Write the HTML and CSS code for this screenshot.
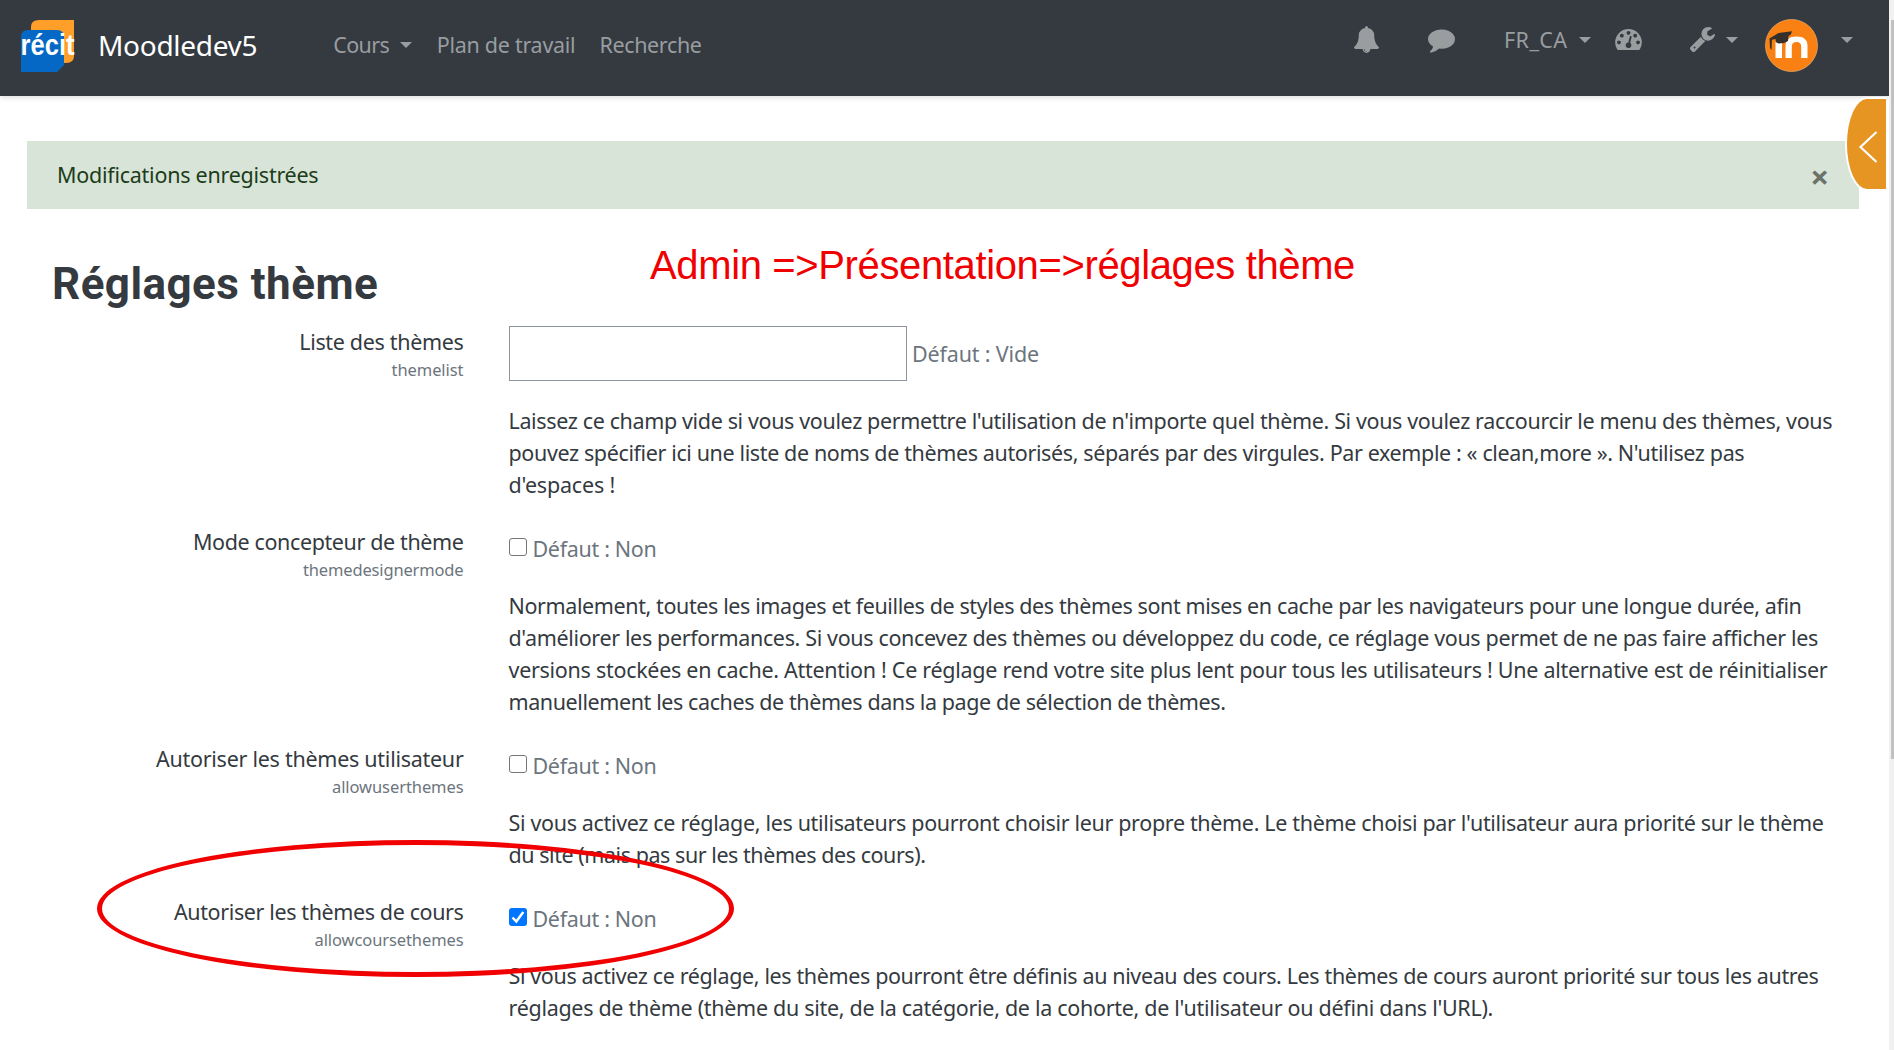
FILE: index.html
```html
<!DOCTYPE html>
<html lang="fr-CA">
<head>
<meta charset="utf-8">
<title>Réglages thème</title>
<link rel="stylesheet" href="styles.css">
</head>
<body>
<header class="navbar">
  <div class="nav-left">
    <svg class="logo" viewBox="0 0 53 52"><path d="M18 0h35v36q0 7-8 7H10V7q0-7 8-7z" fill="#ff9f2a"/><path d="M7 10h29q7 0 7 7v28l-7 7H0V17q0-7 7-7z" fill="#0568c4"/><text class="logo-text" x="-.5" y="34.500" textLength="54" lengthAdjust="spacingAndGlyphs">récit</text></svg>
    <span class="brand">Moodledev5</span>
    <nav class="links">
      <a class="link l1"><span>Cours</span><i class="caret"></i></a>
      <a class="link l2"><span>Plan de travail</span></a>
      <a class="link l3"><span>Recherche</span></a>
    </nav>
  </div>
  <div class="nav-right">
    <svg class="icon bell" viewBox="64 0 1664 1792"><path d="M912 1696q0-16-16-16-59 0-101.500-42.500t-42.500-101.500q0-16-16-16t-16 16q0 73 51.500 124.500t124.500 51.500q16 0 16-16zm816-288q0 52-38 90t-90 38h-448q0 106-75 181t-181 75-181-75-75-181h-448q-52 0-90-38t-38-90q50-42 91-88t85-119.500 74.500-158.500 50-206 19.500-260q0-152 117-282.500t307-158.500q-8-19-8-39 0-40 28-68t68-28 68 28 28 68q0 20-8 39 190 28 307 158.500t117 282.500q0 139 19.500 260t50 206 74.500 158.500 85 119.500 91 88z"/></svg>
    <svg class="icon comment" viewBox="0 256 1792 1536"><path d="M1792 896q0 174-120 321.500t-326 233-450 85.500q-70 0-145-8-198 175-460 242-49 14-114 22-17 2-30.500-9t-17.500-29v-1q-3-4-.5-12t2-10 4.500-9.500l6-9 7-8.500 8-9q7-8 31-34.500t34.500-38 31-39.500 32.500-51 27-59 26-76q-157-89-247.500-220t-90.500-281q0-130 71-248.500t191-204.500 286-136.500 348-50.500q244 0 450 85.500t326 233 120 321.500z"/></svg>
    <span class="lang">FR_CA</span><i class="caret"></i>
    <svg class="icon gauge" viewBox="0 256 1792 1408"><path d="M384 1152q0-53-37.500-90.500t-90.500-37.500-90.500 37.500-37.500 90.500 37.500 90.500 90.500 37.500 90.500-37.500 37.500-90.500zm192-448q0-53-37.500-90.500t-90.500-37.500-90.500 37.500-37.500 90.500 37.500 90.500 90.500 37.500 90.500-37.500 37.500-90.500zm428 481l101-382q6-26-7.500-48.500t-38.500-29.500-48 6.500-30 39.500l-101 382q-60 5-107 43.500t-63 98.500q-20 77 20 146t117 89 146-20 89-117q16-60-6-117t-72-91zm660-33q0-53-37.500-90.500t-90.500-37.500-90.500 37.500-37.500 90.500 37.500 90.500 90.500 37.500 90.500-37.500 37.500-90.500zm-640-640q0-53-37.500-90.500t-90.500-37.500-90.500 37.500-37.500 90.500 37.500 90.500 90.500 37.500 90.500-37.500 37.500-90.500zm448 192q0-53-37.500-90.500t-90.500-37.500-90.500 37.500-37.500 90.500 37.500 90.500 90.500 37.500 90.500-37.500 37.500-90.500zm320 448q0 261-141 483-19 29-54 29h-1402q-35 0-54-29-141-221-141-483 0-182 71-348t191-286 286-191 348-71 348 71 286 191 191 286 71 348z"/></svg>
    <svg class="icon wrench" viewBox="85 128 1641 1643"><path d="M448 1472q0-26-19-45t-45-19-45 19-19 45 19 45 45 19 45-19 19-45zm644-420l-682 682q-37 37-90 37-52 0-91-37l-106-108q-38-36-38-90 0-53 38-91l681-681q39 98 114.500 173.500t173.500 114.500zm634-435q0 39-23 106-47 134-164.500 217.500t-258.500 83.500q-185 0-316.500-131.500t-131.500-316.500 131.500-316.500 316.500-131.500q58 0 121.500 16.500t107.500 46.500q16 11 16 28t-16 28l-293 169v224l193 107q5-3 79-48.500t135.500-81 70.500-35.500q15 0 23.500 10t8.500 25z"/></svg><i class="caret"></i>
    <svg class="avatar" viewBox="0 0 53 53"><circle cx="26.500" cy="26.500" r="26" fill="#f98012" stroke="#e9a765" stroke-width=".8"/><path d="M10.500 23h6.500v16h-6.500zM20.500 39V27q0-9.500 11-9.500T42.500 27v12h-6.300V27.500q0-4.500-4.700-4.500t-4.700 4.500V39z" fill="#fff"/><path d="M4.500 19.500L13.500 14l13.500-1.800-1.200 3.300-2.300 1.500-.5 5q-3.500 2.500-9.500 2.500l-2.500-1.200-.5-3.300-3.500.8L6.500 31 5 29z" fill="#36302c"/></svg><i class="caret"></i>
  </div>
</header>

<main class="page">
  <div class="alert"><span>Modifications enregistrées</span><b class="close">×</b></div>
  <h2 class="title">Réglages thème</h2>

  <section class="setting themelist">
    <div class="label"><span>Liste des thèmes</span><small>themelist</small></div>
    <div class="body">
      <div class="control tall"><span class="field"></span><span class="default">Défaut : Vide</span></div>
      <p class="desc"><span>Laissez ce champ vide si vous voulez permettre l'utilisation de n'importe quel thème. Si vous voulez raccourcir le menu des thèmes, vous</span><span>pouvez spécifier ici une liste de noms de thèmes autorisés, séparés par des virgules. Par exemple : « clean,more ». N'utilisez pas</span><span>d'espaces !</span></p>
    </div>
  </section>

  <section class="setting designer">
    <div class="label"><span>Mode concepteur de thème</span><small>themedesignermode</small></div>
    <div class="body">
      <div class="control"><span class="check"></span><span class="default">Défaut : Non</span></div>
      <p class="desc"><span>Normalement, toutes les images et feuilles de styles des thèmes sont mises en cache par les navigateurs pour une longue durée, afin</span><span>d'améliorer les performances. Si vous concevez des thèmes ou développez du code, ce réglage vous permet de ne pas faire afficher les</span><span>versions stockées en cache. Attention ! Ce réglage rend votre site plus lent pour tous les utilisateurs ! Une alternative est de réinitialiser</span><span>manuellement les caches de thèmes dans la page de sélection de thèmes.</span></p>
    </div>
  </section>

  <section class="setting userthemes">
    <div class="label"><span>Autoriser les thèmes utilisateur</span><small>allowuserthemes</small></div>
    <div class="body">
      <div class="control"><span class="check"></span><span class="default">Défaut : Non</span></div>
      <p class="desc"><span>Si vous activez ce réglage, les utilisateurs pourront choisir leur propre thème. Le thème choisi par l'utilisateur aura priorité sur le thème</span><span>du site (mais pas sur les thèmes des cours).</span></p>
    </div>
  </section>

  <section class="setting coursethemes">
    <div class="label"><span>Autoriser les thèmes de cours</span><small>allowcoursethemes</small></div>
    <div class="body">
      <div class="control"><span class="check on"><svg viewBox="0 0 18 18"><path d="M3.500 9.500l3.800 4L14.300 4"/></svg></span><span class="default">Défaut : Non</span></div>
      <p class="desc"><span>Si vous activez ce réglage, les thèmes pourront être définis au niveau des cours. Les thèmes de cours auront priorité sur tous les autres</span><span>réglages de thème (thème du site, de la catégorie, de la cohorte, de l'utilisateur ou défini dans l'URL).</span></p>
    </div>
  </section>
</main>

<div class="drawer"><svg viewBox="0 0 39 90"><path d="M29.500 33L13.500 48l16 15"/></svg></div>
<div class="scrollbar"><div class="thumb"></div></div>
<div class="note">Admin =&gt;Présentation=&gt;réglages thème</div>
<div class="ring"></div>
</body>
</html>
```
FILE: styles.css
```css
* { box-sizing: border-box; }
body {
  margin: 0;
  height: 1050px;
  overflow: hidden;
  position: relative;
  background: #fff;
  color: #343a40;
  font: 21.5px/32.25px "Noto Sans", sans-serif;
}

/* Top bar */
.navbar {
  width: 1889px;
  height: 96px;
  display: flex;
  justify-content: space-between;
  background: #343a40;
  color: #999da0;
  box-shadow: 0 2px 5px rgba(0, 0, 0, .12);
}
.nav-left { display: flex; align-items: center; height: 90px; padding-left: 21px; white-space: nowrap; }
.logo { width: 53px; height: 52px; margin-top: 2px; overflow: visible; }
.logo-text { font: bold 29px "Liberation Sans", sans-serif; fill: #fff; }
.brand { margin-left: 24px; font-size: 28px; letter-spacing: -.3px; color: #fff; }
.links { display: flex; margin-left: 76px; }
.link { display: flex; align-items: center; }
.l1 { letter-spacing: -.6px; }
.l2 { margin-left: 24.5px; letter-spacing: -.28px; }
.l3 { margin-left: 24px; letter-spacing: -.35px; }
.caret { width: 0; height: 0; border: 6px solid transparent; border-top-color: currentColor; border-bottom: 0; margin-left: 11px; flex: none; }
.nav-right { display: flex; align-items: center; height: 79px; padding-right: 36.5px; white-space: nowrap; }
.lang { letter-spacing: .416px; padding-top: 1px; }
.icon { fill: currentColor; flex: none; }
.bell { width: 25px; height: 27px; }
.comment { width: 27px; height: 24px; margin: 2px 49px 0 49px; }
.gauge { width: 27px; height: 21px; margin-left: 24px; }
.wrench { width: 25px; height: 25px; margin-left: 48px; }
.avatar { width: 53px; height: 53px; margin: 12px 11.5px 0 27.5px; }

/* Page content */
.page { padding: 45px 0 0 27px; }
.alert {
  width: 1832px;
  height: 68px;
  padding: 1px 32px 0 30px;
  display: flex;
  align-items: center;
  justify-content: space-between;
  background: #d8e4d8;
  color: #1c3c1a;
  letter-spacing: -.25px;
}
.close { font-size: 33px; color: #6b7269; padding-top: 4px; margin-right: -2px; }
.title { margin: 45px 0 0 25px; height: 72px; font: bold 44px/60px Roboto, sans-serif; letter-spacing: .45px; white-space: nowrap; }

.setting { display: flex; padding-bottom: 24.6px; }
.label { width: 436.5px; padding-top: 1px; display: flex; flex-direction: column; align-items: flex-end; line-height: 30px; white-space: nowrap; }
.label small { font-size: 16.5px; line-height: 26px; color: #6c757d; }
.body { margin-left: 45px; }
.control { display: flex; align-items: center; height: 44px; color: #6c757d; white-space: nowrap; }
.control.tall { height: 55px; }
.field { width: 398px; height: 55px; margin-right: 5.5px; border: 1px solid #8f959e; }
.check { width: 18px; height: 18px; margin: -2px 6px 0 0; border: 1.500px solid #767676; border-radius: 3px; }
.default { margin-top: 2px; letter-spacing: -.327px; }
.tall .default { margin-top: 1px; letter-spacing: -.159px; }
.check.on { border: 0; background: #0075ff; }
.check svg { display: block; fill: none; stroke: #fff; stroke-width: 2.500; }
.desc { margin: 19.6px 0 0; white-space: nowrap; letter-spacing: -.362px; }
.tall + .desc { margin-top: 23.7px; }
.desc span { display: block; }

/* Tracking per line */
.themelist .label span { letter-spacing: -.33px; }
.themelist small { letter-spacing: -.064px; }
.themelist .desc span:nth-child(2) { letter-spacing: -.376px; }
.themelist .desc span:nth-child(3) { letter-spacing: -.191px; }
.designer .label span { letter-spacing: -.384px; }
.designer small { letter-spacing: -.155px; }
.designer .desc span:nth-child(1) { letter-spacing: -.391px; }
.designer .desc span:nth-child(2) { letter-spacing: -.351px; }
.designer .desc span:nth-child(3) { letter-spacing: -.283px; }
.designer .desc span:nth-child(4) { letter-spacing: -.408px; }
.userthemes .label span { letter-spacing: -.268px; }
.userthemes small { letter-spacing: -.081px; }
.userthemes .desc span:nth-child(1) { letter-spacing: -.338px; }
.userthemes .desc span:nth-child(2) { letter-spacing: -.45px; }
.coursethemes .label span { letter-spacing: -.386px; }
.coursethemes small { letter-spacing: -.096px; }
.coursethemes .desc span:nth-child(1) { letter-spacing: -.375px; }
.coursethemes .desc span:nth-child(2) { letter-spacing: -.3px; }

/* Floating elements */
.drawer {
  position: absolute; left: 1845px; top: 97px; width: 41px; height: 94px;
  background: #e69422;
  border: 2px solid #fff; border-right: 0;
  border-radius: 22px 0 0 22px / 47px 0 0 47px;
}
.drawer svg { display: block; width: 39px; height: 90px; fill: none; stroke: #fff; stroke-width: 2.200; }
.scrollbar { position: absolute; right: 0; top: 0; width: 5px; height: 1050px; background: #f1f1f1; }
.thumb { margin: 20px 0 0 2px; height: 739px; background: #c1c1c1; }
.note { position: absolute; left: 650px; top: 241px; font: 40px/48px "Liberation Sans", sans-serif; letter-spacing: -.368px; color: #f00000; white-space: nowrap; }
.ring { position: absolute; left: 97px; top: 840px; width: 637px; height: 137px; border: 5px solid #f00000; border-radius: 50%; }
```
